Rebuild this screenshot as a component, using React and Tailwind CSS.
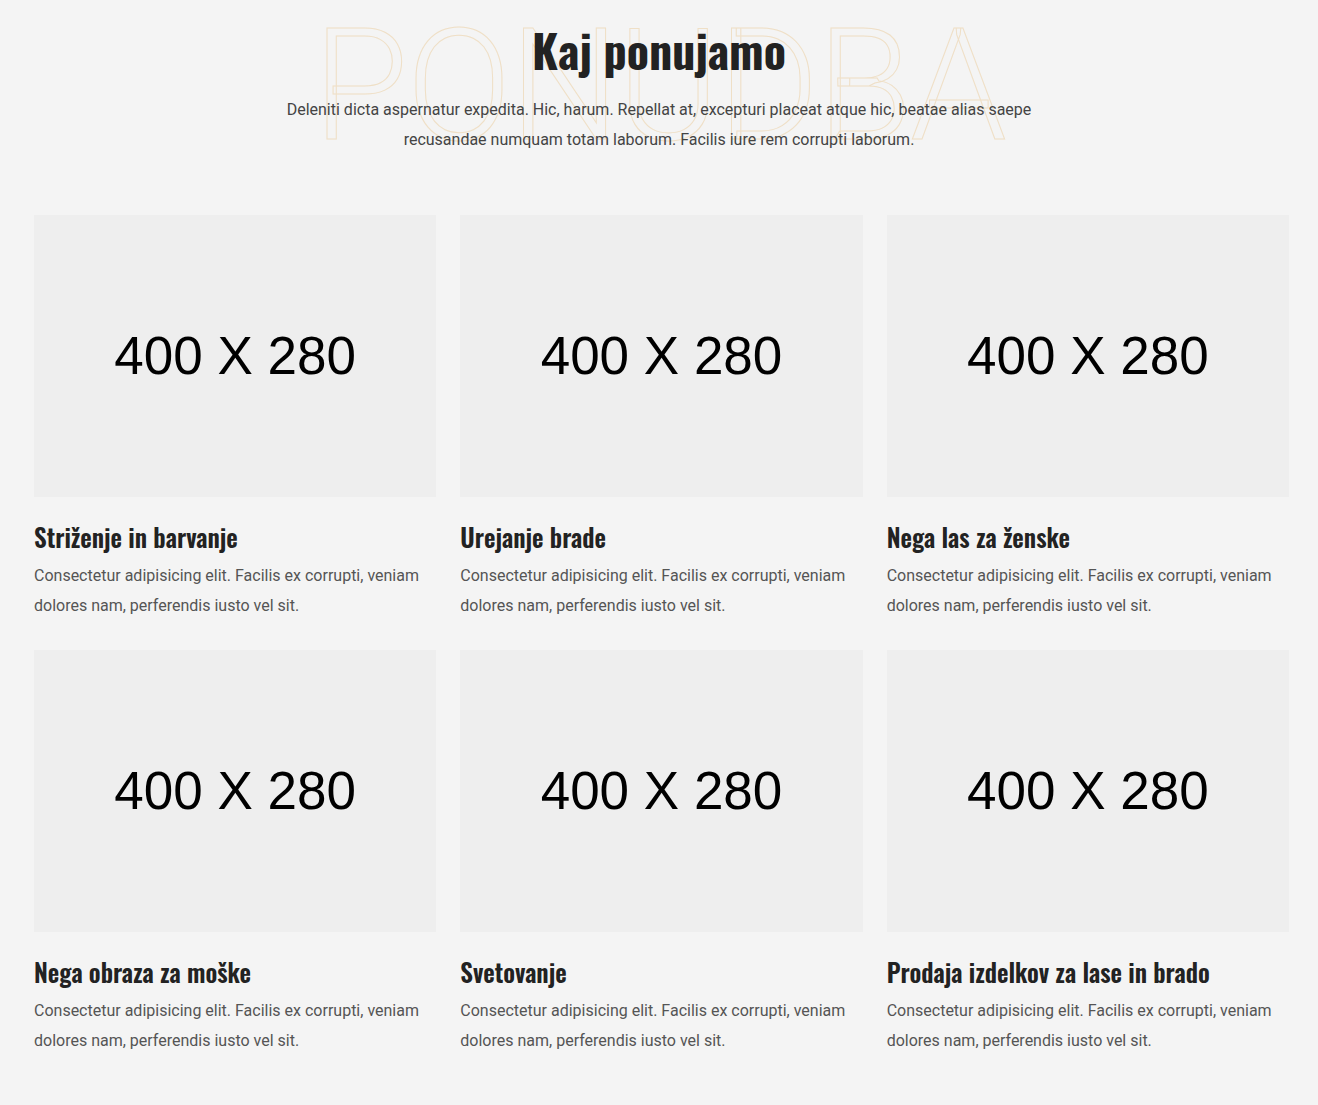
const services = [
  'Striženje in barvanje',
  'Urejanje brade',
  'Nega las za ženske',
  'Nega obraza za moške',
  'Svetovanje',
  'Prodaja izdelkov za lase in brado',
];

const headFont = "font-['Oswald','Roboto_Condensed','DejaVu_Sans_Condensed','Liberation_Sans_Narrow',sans-serif]";

export default function App() {
  return (
    <div className="min-h-screen bg-[#f4f4f4] font-['Roboto',sans-serif] pb-12">
      {/* Section header */}
      <div className="relative pt-[22px] text-center">
        <div
          aria-hidden="true"
          className="pointer-events-none absolute left-0 right-0 top-[9px] select-none text-center font-['Roboto',sans-serif] text-[155px] font-light leading-none tracking-[-2px] text-transparent [-webkit-text-stroke:1px_#efdfc6]"
        >
          PONUDBA
        </div>
        <h2 className={`relative ${headFont} text-[46px] font-bold leading-[54px] text-[#222]`}>
          Kaj ponujamo
        </h2>
        <p className="relative mx-auto mt-[19px] max-w-[760px] text-[16px] leading-[30px] text-[#444]">
          Deleniti dicta aspernatur expedita. Hic, harum. Repellat at, excepturi placeat atque hic, beatae alias saepe
          recusandae numquam totam laborum. Facilis iure rem corrupti laborum.
        </p>
      </div>

      {/* Service cards */}
      <div className="ml-[34px] mt-[60px] grid w-[1255px] grid-cols-3 gap-x-[24px] gap-y-[29px]">
        {services.map((title) => (
          <div key={title}>
            <div className="flex h-[282px] items-center justify-center bg-[#eeeeee]">
              <span className="font-['Liberation_Sans',Arial,sans-serif] text-[53px] text-black">400 X 280</span>
            </div>
            <h3 className={`mt-[24px] ${headFont} text-[25px] font-semibold leading-[32px] text-[#222]`}>
              {title}
            </h3>
            <p className="mt-[8px] text-[16px] leading-[30px] text-[#555]">
              Consectetur adipisicing elit. Facilis ex corrupti, veniam dolores nam, perferendis iusto vel sit.
            </p>
          </div>
        ))}
      </div>
    </div>
  );
}
